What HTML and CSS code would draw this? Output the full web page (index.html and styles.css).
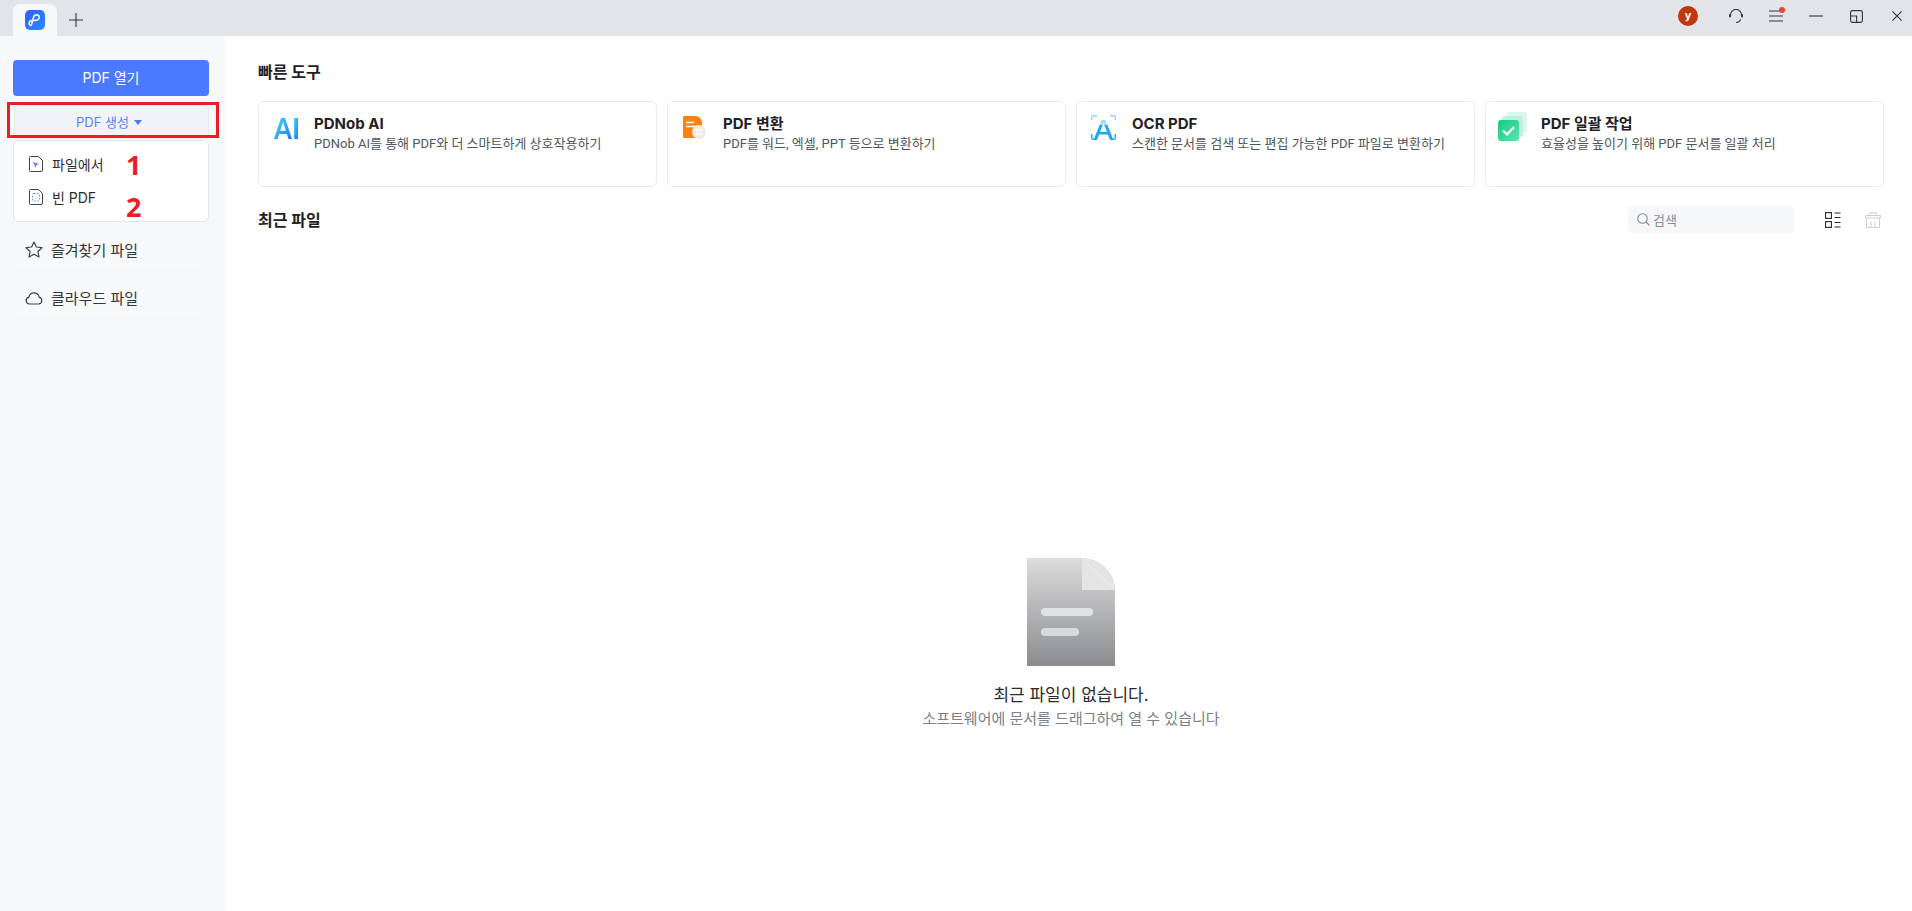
FILE: index.html
```html
<!DOCTYPE html>
<html lang="ko">
<head>
<meta charset="utf-8">
<title>PDNob</title>
<link rel="stylesheet" href="styles.css">
</head>
<body>
<header class="titlebar">
  <div class="tab">
    <svg class="logo" width="20" height="20" viewBox="0 0 20 20"><defs><linearGradient id="lg" x1="0" y1="0" x2="1" y2="1"><stop offset="0" stop-color="#2f5fff"/><stop offset="1" stop-color="#2a8cff"/></linearGradient></defs><rect width="20" height="20" rx="5" fill="url(#lg)"/><path d="M6.500 15.500c-1.700 0-2.700-1.200-2.300-2.700.4-1.500 1.800-2.400 3.400-2.400h3c1.800 0 3.200-1 3.600-2.500.4-1.600-.7-3-2.500-3-1.600 0-2.900 1.100-3.300 2.700l-1.400 5.500c-.2 1.300-1.100 2.400-2.500 2.400z" fill="none" stroke="#eef3ff" stroke-width="1.600"/></svg>
  </div>
  <svg class="plus" width="14" height="14" viewBox="0 0 14 14"><path d="M7 0v14M0 7h14" stroke="#33363d" stroke-width="1.100"/></svg>
  <div class="tb-right">
    <span class="avatar">y</span>
    <svg class="tb-icon" width="14" height="14" viewBox="0 0 14 14"><path d="M1.500 7V6a5.500 5.500 0 0 1 11 0v1M7 13.300c2.500 0 4-1 4.500-3" fill="none" stroke="#3a3d45" stroke-width="1.200"/><rect x="0" y="5" width="2" height="3.500" rx="1" fill="#3a3d45"/><rect x="12" y="5" width="2" height="3.500" rx="1" fill="#3a3d45"/></svg>
    <span class="menu-wrap">
      <svg width="14" height="12" viewBox="0 0 14 12"><path d="M0 1h14M0 6h14M0 11h14" stroke="#33363d" stroke-width="1"/></svg>
      <i class="dot"></i>
    </span>
    <svg class="tb-icon tb-min" width="14" height="2" viewBox="0 0 14 2"><path d="M0 1h14" stroke="#33363d" stroke-width="1.100"/></svg>
    <svg class="tb-icon tb-max" width="13" height="13" viewBox="0 0 13 13"><rect x=".6" y=".6" width="11.800" height="11.800" rx="1.800" fill="none" stroke="#33363d" stroke-width="1.100"/><path d="M.6 6h6v6.400" fill="none" stroke="#33363d" stroke-width="1.100"/></svg>
    <svg class="tb-icon tb-close" width="10" height="10" viewBox="0 0 10 10"><path d="M.4.400l9.200 9.200M9.600.400L.4 9.600" stroke="#33363d" stroke-width="1.100"/></svg>
  </div>
</header>
<div class="app">
  <aside class="sidebar">
    <button class="open-btn">PDF 열기</button>
    <div class="create-row">
      <span class="create-label">PDF 생성</span><i class="caret"></i>
      <span class="red-box"></span>
    </div>
    <div class="dropdown">
      <div class="dd-item">
        <svg width="14" height="16" viewBox="0 0 14 16"><path d="M1.500.500h8l4 4v9.500a1.500 1.500 0 0 1-1.500 1.500H1.500A1 1 0 0 1 .5 14.500V1.500a1 1 0 0 1 1-1z" fill="none" stroke="#3f424a"/><path d="M4 6l6 2-2.500 1-1 2.800z" fill="#5b86ff"/></svg>
        <span>파일에서</span>
      </div>
      <div class="dd-item">
        <svg width="14" height="16" viewBox="0 0 14 16"><path d="M1.500.500h8l4 4v9.500a1.500 1.500 0 0 1-1.500 1.500H1.500A1 1 0 0 1 .5 14.500V1.500a1 1 0 0 1 1-1z" fill="none" stroke="#3f424a"/><rect x="3.500" y="4.500" width="7" height="7.500" rx="1.500" fill="none" stroke="#5b86ff" stroke-dasharray="1.500 1.500"/></svg>
        <span>빈 PDF</span>
      </div>
      <span class="mark mark-1">1</span>
      <span class="mark mark-2">2</span>
    </div>
    <div class="nav-item">
      <svg width="18" height="17" viewBox="0 0 18 17"><path d="M9 1l2.400 5 5.600.7-4.100 3.800 1.100 5.500L9 13.300 4 16l1.100-5.500L1 6.700 6.600 6z" fill="none" stroke="#3f424a" stroke-width="1.200" stroke-linejoin="round"/></svg>
      <span>즐겨찾기 파일</span>
    </div>
    <div class="nav-item">
      <svg width="18" height="15" viewBox="0 0 18 15"><path d="M4.500 14a3.500 3.500 0 0 1-.6-6.900 5.200 5.200 0 0 1 10.200 0 3.500 3.500 0 0 1-.6 6.900z" fill="none" stroke="#3f424a" stroke-width="1.200"/></svg>
      <span>클라우드 파일</span>
    </div>
  </aside>
  <main class="main">
    <h2 class="section-title">빠른 도구</h2>
    <section class="cards">
      <article class="card">
        <svg class="card-icon icon-ai" width="24" height="21" viewBox="0 0 24 21"><defs><linearGradient id="ai" x1="0" y1="0" x2="1" y2="1"><stop offset="0" stop-color="#3fe0f2"/><stop offset="1" stop-color="#2a72f8"/></linearGradient></defs><path fill-rule="evenodd" d="M0 21L7 0h4l7 21h-3.600l-1.500-5H5.100l-1.500 5zM6.100 12.800h5.800L9 4z" fill="url(#ai)"/><rect x="20" y="0" width="4" height="21" fill="url(#ai)"/></svg>
        <div class="card-text"><h3>PDNob AI</h3><p>PDNob AI를 통해 PDF와 더 스마트하게 상호작용하기</p></div>
      </article>
      <article class="card">
        <svg class="card-icon icon-conv" width="23" height="23" viewBox="0 0 23 23"><path d="M1 0h11c4 0 7 3 7 7v15H1a1 1 0 0 1-1-1V1a1 1 0 0 1 1-1z" fill="#ff8210"/><path d="M3 6.500h8M3 10.500h13" stroke="#fff" stroke-width="1.300"/><circle cx="16" cy="16" r="7" fill="#f0ebe6"/><path d="M12.500 14h7M12.500 18h7" stroke="#fff" stroke-width="1.300"/></svg>
        <div class="card-text"><h3>PDF 변환</h3><p>PDF를 워드, 엑셀, PPT 등으로 변환하기</p></div>
      </article>
      <article class="card">
        <svg class="card-icon icon-ocr" width="25" height="25" viewBox="0 0 25 25"><path d="M.7 5.500V2.200A1.500 1.500 0 0 1 2.200.7H6M19 .7h3.800a1.500 1.500 0 0 1 1.500 1.500v3.300" fill="none" stroke="#8fd8fa" stroke-width="1.400"/><path d="M.7 19v3.800a1.500 1.500 0 0 0 1.500 1.500H6M19 24.300h3.800a1.500 1.500 0 0 0 1.500-1.500V19" fill="none" stroke="#1fa8f0" stroke-width="1.400"/><path fill-rule="evenodd" d="M3 24L10.500 5h4L22 24h-3.500l-1.500-4.500H8L6.500 24zM9 17h7L12.500 8z" fill="#1fa8f0"/><rect x="0" y="5" width="25" height="5" fill="#fff" opacity=".6"/></svg>
        <div class="card-text"><h3>OCR PDF</h3><p>스캔한 문서를 검색 또는 편집 가능한 PDF 파일로 변환하기</p></div>
      </article>
      <article class="card">
        <svg class="card-icon icon-batch" width="29" height="29" viewBox="0 0 29 29"><rect x="8" y="0" width="21" height="21" rx="3" fill="#dcf7ee"/><rect x="4" y="4" width="21" height="21" rx="3" fill="#bff0de"/><defs><linearGradient id="gr" x1="0" y1="0" x2="1" y2="1"><stop offset="0" stop-color="#12cc80"/><stop offset="1" stop-color="#5fe3b0"/></linearGradient></defs><rect x="0" y="8" width="21" height="21" rx="3" fill="url(#gr)"/><path d="M5 18.500l4 4 7-7.500" fill="none" stroke="#fff" stroke-width="2.200"/></svg>
        <div class="card-text"><h3>PDF 일괄 작업</h3><p>효율성을 높이기 위해 PDF 문서를 일괄 처리</p></div>
      </article>
    </section>
    <div class="recent-head">
      <h2 class="section-title">최근 파일</h2>
      <div class="recent-tools">
        <div class="search">
          <svg width="13" height="13" viewBox="0 0 13 13"><circle cx="5.500" cy="5.500" r="4.800" fill="none" stroke="#8a8d96" stroke-width="1.100"/><path d="M9 9l3.500 3.500" stroke="#8a8d96" stroke-width="1.100"/></svg>
          <span>검색</span>
        </div>
        <svg class="view" width="16" height="16" viewBox="0 0 16 16"><rect x=".6" y=".6" width="5.800" height="5.800" fill="none" stroke="#24262c" stroke-width="1.100"/><rect x=".6" y="9.600" width="5.800" height="5.800" fill="none" stroke="#24262c" stroke-width="1.100"/><path d="M9.500 1h6M9.500 5.500h6M9.500 10.500h6M9.500 15h6" stroke="#24262c" stroke-width="1.100"/></svg>
        <svg class="trash" width="16" height="16" viewBox="0 0 16 16"><path d="M5 3V.7h6V3M.5 3.500h15v2.500H.5zM1.500 6v9.500h13V6M6 9.500v6M10 9.500v6" fill="none" stroke="#cdced3" stroke-width="1"/></svg>
      </div>
    </div>
    <section class="empty">
      <svg width="88" height="108" viewBox="0 0 88 108"><defs><linearGradient id="doc" x1="0" y1="0" x2="0" y2="1"><stop offset="0" stop-color="#dcdcdc"/><stop offset="1" stop-color="#8b8c90"/></linearGradient></defs><path d="M0 0h55a33 33 0 0 1 33 33v75H0z" fill="url(#doc)"/><path d="M55 0a33 33 0 0 1 33 32H55z" fill="#e4e4e5"/><path d="M55 0l33 32" stroke="#eeeeee" stroke-width="1"/><rect x="14" y="50" width="52" height="8" rx="4" fill="#e1e2e3"/><rect x="14" y="70" width="38" height="8" rx="4" fill="#d8d9da"/></svg>
      <p class="empty-title">최근 파일이 없습니다.</p>
      <p class="empty-sub">소프트웨어에 문서를 드래그하여 열 수 있습니다</p>
    </section>
  </main>
</div>
</body>
</html>
```
FILE: styles.css
```css
* { box-sizing: border-box; }
html, body { margin: 0; height: 100%; }
body {
  width: 1912px;
  height: 911px;
  overflow: hidden;
  background: #fff;
  color: #1f2126;
  font-family: "Inter", "Noto Sans CJK KR", "Liberation Sans", sans-serif;
  display: flex;
  flex-direction: column;
}
h2, h3, p { margin: 0; }

.titlebar {
  height: 36px;
  flex: none;
  background: #e3e4e9;
  display: flex;
  align-items: stretch;
  padding-left: 13px;
}
.tab {
  width: 44px;
  margin-top: 4px;
  background: #f7f8fa;
  border-radius: 7px 7px 0 0;
  display: flex;
  align-items: center;
  justify-content: center;
}
.plus { margin: 13px 0 0 12px; }
.tb-right {
  margin-left: auto;
  display: flex;
  align-items: center;
  padding: 0 10px 4px 0;
}
.avatar {
  width: 20px;
  height: 20px;
  border-radius: 50%;
  background: #c1370b;
  color: #fff;
  font-size: 11px;
  font-weight: 700;
  line-height: 18px;
  text-align: center;
  margin-right: 31px;
}
.menu-wrap {
  position: relative;
  display: flex;
  margin-left: 26px;
}
.dot {
  position: absolute;
  top: -3px;
  right: -2px;
  width: 6px;
  height: 6px;
  border-radius: 50%;
  background: #f04338;
}
.tb-icon { flex: none; }
.tb-min { margin-left: 26px; }
.tb-max { margin-left: 27px; }
.tb-close { margin-left: 29px; }

.app { flex: 1; display: flex; min-height: 0; }
.sidebar {
  width: 225px;
  flex: none;
  background: #f7f8fa;
  padding: 24px 16px 0 13px;
  display: flex;
  flex-direction: column;
}
.open-btn {
  height: 36px;
  border: 0;
  border-radius: 4px;
  background: #4a7aff;
  color: #fff;
  font: inherit;
  font-size: 14px;
  padding: 0 0 2px;
}
.create-row {
  position: relative;
  height: 32px;
  margin: 9px 0 0 1px;
  padding-right: 5px;
  background: #f2f3f6;
  border: 1px solid #e6e7eb;
  border-bottom: 0;
  border-radius: 4px 4px 0 0;
  color: #5b82f2;
  font-size: 13px;
  display: flex;
  align-items: center;
  justify-content: center;
  gap: 5px;
}
.caret {
  width: 0;
  height: 0;
  border-left: 4px solid transparent;
  border-right: 4px solid transparent;
  border-top: 5px solid #4a7aff;
  margin-top: 2px;
}
.red-box {
  position: absolute;
  left: -8px;
  right: -11px;
  top: -4px;
  bottom: -1px;
  border: 3px solid #ee1c25;
}
.dropdown {
  position: relative;
  height: 82px;
  margin-top: 3px;
  background: #fff;
  border: 1px solid #e4e5ea;
  border-radius: 5px;
  padding: 6px 0 0 15px;
}
.dd-item {
  height: 33px;
  display: flex;
  align-items: center;
  gap: 9px;
  font-size: 14px;
  color: #2b2d33;
}
.mark {
  position: absolute;
  color: #ee1c25;
  font-family: "Open Sans", "Liberation Sans", sans-serif;
  font-size: 27px;
  font-weight: 700;
  line-height: 30px;
}
.mark-1 { left: 112px; top: 9px; }
.mark-2 { left: 112px; top: 51px; }
.nav-item {
  height: 38px;
  margin: 8px 1px 0;
  background: #f8f9fb;
  border-radius: 5px;
  display: flex;
  align-items: center;
  gap: 8px;
  padding-left: 11px;
  font-size: 15px;
  color: #33353b;
}
.nav-item + .nav-item { margin-top: 10px; }

.main {
  flex: 1;
  min-width: 0;
  padding: 26px 28px 0 33px;
  display: flex;
  flex-direction: column;
}
.section-title {
  font-size: 16px;
  font-weight: 700;
  line-height: 20px;
  color: #1f2126;
}
.cards {
  display: grid;
  grid-template-columns: repeat(4, 1fr);
  gap: 10px;
  margin-top: 19px;
}
.card {
  height: 86px;
  border: 1px solid #ebecef;
  border-radius: 6px;
  display: flex;
  padding-top: 12px;
}
.card-icon { flex: none; }
.icon-ai { margin: 4px 16px 0 15px; }
.icon-conv { margin: 2px 17px 0 15px; }
.icon-ocr { margin: 1px 16px 0 14px; }
.icon-batch { margin: -2px 14px 0 12px; }
.card-text { min-width: 0; }
.card h3 {
  font-size: 15px;
  font-weight: 700;
  line-height: 20px;
  color: #1f2126;
}
.card p {
  font-family: "Roboto", "Noto Sans CJK KR", sans-serif;
  font-size: 13px;
  line-height: 18px;
  margin-top: 1px;
  color: #4d5561;
  white-space: nowrap;
}
.recent-head {
  display: flex;
  align-items: center;
  justify-content: space-between;
  margin-top: 19px;
  height: 27px;
}
.recent-tools { display: flex; align-items: center; }
.search {
  width: 166px;
  height: 27px;
  border-radius: 4px;
  background: #f6f7f9;
  display: flex;
  align-items: center;
  gap: 3px;
  padding-left: 9px;
  color: #8a8d96;
  font-size: 13px;
}
.view { margin-left: 31px; }
.trash { margin: 0 3px 0 24px; }
.empty {
  display: flex;
  flex-direction: column;
  align-items: center;
  margin-top: 325px;
}
.empty-title {
  margin-top: 18px;
  font-size: 17px;
  line-height: 22px;
  color: #2a2c31;
}
.empty-sub {
  margin-top: 3px;
  font-size: 15px;
  line-height: 20px;
  color: #7d8088;
}
```
